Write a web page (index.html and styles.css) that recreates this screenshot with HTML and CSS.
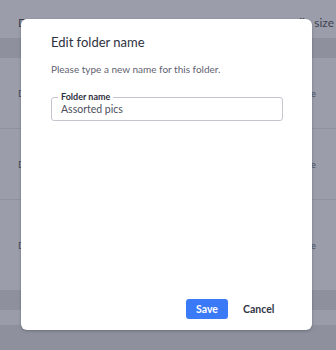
FILE: index.html
```html
<!DOCTYPE html>
<html>
<head>
<meta charset="utf-8">
<link rel="stylesheet" href="styles.css">
</head>
<body>
<div class="page">
  <div class="top"><span>Date</span><span>File size</span></div>
  <div class="band"></div>
  <div class="row r1"><span>Doc</span><span>size</span></div>
  <div class="row r2"><span>Doc</span><span>size</span></div>
  <div class="row r3"><span>Doc</span><span>size</span></div>
  <div class="band b2"></div>
  <div class="light2"></div>
  <div class="band b3"></div>
</div>
<div class="overlay">
  <div class="modal">
    <h1 class="title">Edit folder name</h1>
    <p class="desc">Please type a new name for this folder.</p>
    <fieldset class="field">
      <legend class="legend">Folder name</legend>
      <div class="value">Assorted pics</div>
    </fieldset>
    <div class="spacer"></div>
    <div class="actions">
      <button class="btn save">Save</button>
      <button class="btn cancel">Cancel</button>
    </div>
  </div>
</div>
</body>
</html>
```
FILE: styles.css
```css
* { box-sizing: border-box; }
html, body { margin: 0; padding: 0; }
body {
  width: 336px; height: 350px; overflow: hidden;
  font-family: Lato, "Open Sans", sans-serif;
  background: #9b9eaa;
  position: relative;
}
.page { display: flex; flex-direction: column; height: 350px; }
.top {
  height: 38px; display: flex; justify-content: space-between; align-items: flex-end;
  padding: 0 2px 8px 18px; font-size: 12px; color: #3f4250; background: #9b9eaa;
}
.band { height: 20px; background: #8e919d; flex: none; }
.row {
  height: 71px; display: flex; justify-content: space-between; align-items: center;
  padding: 0 20px 0 18px; font-size: 10px; color: #4a4d5a; background: #9b9eaa;
  border-bottom: 1px solid #8f929e; flex: none;
}
.r3 { height: 90px; border-bottom: none; }
.b2 { height: 20px; }
.light2 { height: 15px; background: #9a9da9; flex: none; }
.b3 { flex: 1; }
.overlay {
  position: absolute; inset: 0;
  display: flex; justify-content: flex-start; align-items: flex-start;
  padding: 19px 24px 0 21px;
}
.modal {
  width: 291px; height: 311px; background: #fff; border-radius: 6px;
  box-shadow: 0 1px 3px rgba(40,44,60,0.35);
  padding: 14px 29px 11px 30px;
  display: flex; flex-direction: column;
}
.title {
  margin: 0; font-size: 13px; font-weight: 400; color: #2e3140; line-height: 18px;
}
.desc {
  margin: 12px 0 0; font-size: 10px; color: #5f6372; line-height: 13px;
}
.field {
  margin: 16px 0 0; padding: 0 9px 5px; border: 1px solid #c3c6d0; border-radius: 3px;
  height: 29px; min-width: 0;
}
.legend {
  padding: 0 3px; margin-left: -3px; font-size: 9px; font-weight: 700; color: #2e3140; line-height: 10px;
}
.value { font-size: 10.5px; color: #4b4e5c; line-height: 14px; margin-top: 0; }
.spacer { flex: 1; }
.actions { display: flex; justify-content: flex-end; align-items: center; gap: 15px; padding-right: 10px; }
.btn {
  font-family: Lato, sans-serif; font-size: 10.5px; font-weight: 700; border: none; cursor: pointer;
  height: 20px; border-radius: 3px; padding: 0;
}
.save { background: #3b7af6; color: #fff; width: 42px; }
.cancel { background: transparent; color: #333645; width: 30px; }
```
